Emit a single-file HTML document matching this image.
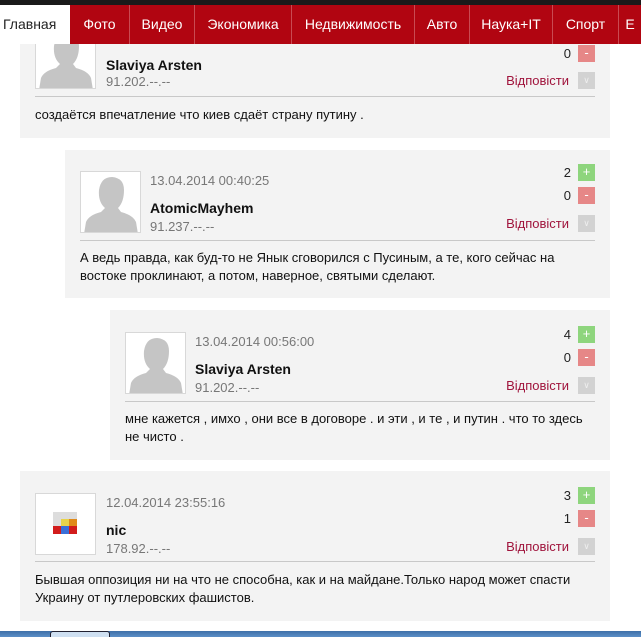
<!DOCTYPE html>
<html><head><meta charset="utf-8"><style>
*{margin:0;padding:0;box-sizing:border-box}
body{width:641px;height:637px;overflow:hidden;background:#fff;font-family:"Liberation Sans",Arial,sans-serif;position:relative}
.top{position:absolute;left:0;top:0;width:641px;height:5px;background:#1a1a1a}
.nav{position:absolute;left:0;top:5px;width:641px;height:39px;background:#b10511;display:flex;font-size:14px;color:#fff}
.nav div{height:39px;line-height:38px;text-align:center;border-right:1px solid #c94a52;white-space:nowrap;flex:none}
.nav .act{background:#fff;color:#222;text-align:left;padding-left:3px;border:none}
.box{position:absolute;background:#f3f3f3}
.av{position:absolute;width:61px;height:62px;border:1px solid #d8d8d8;background:#fff;overflow:hidden}
.date{position:absolute;font-size:13px;color:#777}
.name{position:absolute;font-size:14px;font-weight:bold;color:#111}
.ip{position:absolute;font-size:13px;color:#777}
.line{position:absolute;height:1px;background:#c8c8c8}
.txt{position:absolute;font-size:13px;color:#111;line-height:18px}
.num{position:absolute;font-size:13px;color:#222;text-align:right;width:20px}
.b{position:absolute;width:17px;height:17px;color:#fff;font-size:13px;text-align:center;line-height:16px}
.p{background:#8ed57d}.m{background:#e68787}.r{background:#d2d2d2;font-size:9px;color:#eee}
.rep{position:absolute;font-size:13px;color:#a0143c;width:64px;text-align:right}
.task{position:absolute;left:0;top:631px;width:641px;height:6px;background:linear-gradient(#3d6fa8,#5b8fc7)}
</style></head><body>
<div class="top"></div>

<div class="box" style="left:20px;top:44px;width:590px;height:94px"></div>
<div class="av" style="left:35px;top:27px"><svg width="61" height="62" viewBox="0 0 61 62"><path d="M3 62 L5 50 Q8 43 20 40 L24 36 Q17 30 18 18 Q20 5 31 5 Q43 6 43 18 Q43 30 37 36 L40 40 Q52 43 55 50 L57 62Z" fill="#c5c5c5"/></svg></div>
<div class="name" style="left:106px;top:57px">Slaviya Arsten</div>
<div class="ip" style="left:106px;top:74px">91.202.--.--</div>
<div class="num" style="left:551px;top:46px">0</div>
<div class="b m" style="left:578px;top:45px">-</div>
<div class="rep" style="left:505px;top:73px">Відповісти</div>
<div class="b r" style="left:578px;top:72px">∨</div>
<div class="line" style="left:35px;top:96px;width:560px"></div>
<div class="txt" style="left:35px;top:106px">создаётся впечатление что киев сдаёт страну путину .</div>

<div class="box" style="left:65px;top:150px;width:545px;height:148px"></div>
<div class="av" style="left:80px;top:171px"><svg width="61" height="62" viewBox="0 0 61 62"><path d="M3 62 L5 50 Q8 43 20 40 L24 36 Q17 30 18 18 Q20 5 31 5 Q43 6 43 18 Q43 30 37 36 L40 40 Q52 43 55 50 L57 62Z" fill="#c5c5c5"/></svg></div>
<div class="date" style="left:150px;top:173px">13.04.2014 00:40:25</div>
<div class="name" style="left:150px;top:200px">AtomicMayhem</div>
<div class="ip" style="left:150px;top:219px">91.237.--.--</div>
<div class="num" style="left:551px;top:165px">2</div>
<div class="b p" style="left:578px;top:164px">+</div>
<div class="num" style="left:551px;top:188px">0</div>
<div class="b m" style="left:578px;top:187px">-</div>
<div class="rep" style="left:505px;top:216px">Відповісти</div>
<div class="b r" style="left:578px;top:215px">∨</div>
<div class="line" style="left:80px;top:240px;width:515px"></div>
<div class="txt" style="left:80px;top:249px">А ведь правда, как буд-то не Янык сговорился с Пусиным, а те, кого сейчас на<br>востоке проклинают, а потом, наверное, святыми сделают.</div>

<div class="box" style="left:110px;top:310px;width:500px;height:150px"></div>
<div class="av" style="left:125px;top:332px"><svg width="61" height="62" viewBox="0 0 61 62"><path d="M3 62 L5 50 Q8 43 20 40 L24 36 Q17 30 18 18 Q20 5 31 5 Q43 6 43 18 Q43 30 37 36 L40 40 Q52 43 55 50 L57 62Z" fill="#c5c5c5"/></svg></div>
<div class="date" style="left:195px;top:334px">13.04.2014 00:56:00</div>
<div class="name" style="left:195px;top:361px">Slaviya Arsten</div>
<div class="ip" style="left:195px;top:380px">91.202.--.--</div>
<div class="num" style="left:551px;top:327px">4</div>
<div class="b p" style="left:578px;top:326px">+</div>
<div class="num" style="left:551px;top:350px">0</div>
<div class="b m" style="left:578px;top:349px">-</div>
<div class="rep" style="left:505px;top:378px">Відповісти</div>
<div class="b r" style="left:578px;top:377px">∨</div>
<div class="line" style="left:125px;top:401px;width:470px"></div>
<div class="txt" style="left:125px;top:410px">мне кажется , имхо , они все в договоре . и эти , и те , и путин . что то здесь<br>не чисто .</div>

<div class="box" style="left:20px;top:471px;width:590px;height:150px"></div>
<div class="av" style="left:35px;top:493px"><svg width="61" height="62" viewBox="0 0 61 62">
<rect x="17" y="18" width="8" height="7" fill="#ddd"/><rect x="25" y="18" width="8" height="7" fill="#ddd"/><rect x="33" y="18" width="8" height="7" fill="#ddd"/>
<rect x="17" y="25" width="8" height="7" fill="#ddd"/><rect x="25" y="25" width="8" height="7" fill="#e8d34a"/><rect x="33" y="25" width="8" height="7" fill="#e08a1a"/>
<rect x="17" y="32" width="8" height="8" fill="#d21c1c"/><rect x="25" y="32" width="8" height="8" fill="#3a6fd8"/><rect x="33" y="32" width="8" height="8" fill="#d21c1c"/></svg></div>
<div class="date" style="left:106px;top:495px">12.04.2014 23:55:16</div>
<div class="name" style="left:106px;top:522px">nic</div>
<div class="ip" style="left:106px;top:541px">178.92.--.--</div>
<div class="num" style="left:551px;top:488px">3</div>
<div class="b p" style="left:578px;top:487px">+</div>
<div class="num" style="left:551px;top:511px">1</div>
<div class="b m" style="left:578px;top:510px">-</div>
<div class="rep" style="left:505px;top:539px">Відповісти</div>
<div class="b r" style="left:578px;top:538px">∨</div>
<div class="line" style="left:35px;top:561px;width:560px"></div>
<div class="txt" style="left:35px;top:571px">Бывшая оппозиция ни на что не способна, как и на майдане.Только народ может спасти<br>Украину от путлеровских фашистов.</div>

<div class="nav"><div class="act" style="width:70px">Главная</div><div style="width:60px">Фото</div><div style="width:65px">Видео</div><div style="width:97px">Экономика</div><div style="width:123px">Недвижимость</div><div style="width:55px">Авто</div><div style="width:83px">Наука+IT</div><div style="width:66px">Спорт</div><div style="width:22px;border:none">Е</div></div>
<div class="task"><div style="position:absolute;left:50px;top:0;width:60px;height:6px;border:1px solid #223;border-bottom:none;border-radius:3px 3px 0 0;background:#cfe0f2"></div></div>
</body></html>
